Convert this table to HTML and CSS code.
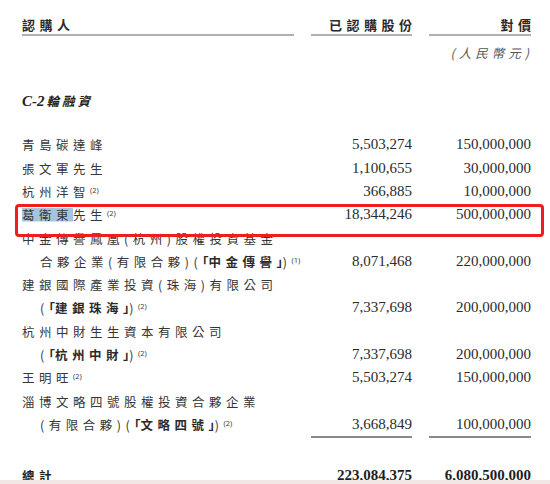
FILE: index.html
```html
<!DOCTYPE html>
<html lang="zh-Hant">
<head>
<meta charset="utf-8">
<title>認購人</title>
<link rel="stylesheet" href="styles.css">
</head>
<body>
<div class="page">
  <div class="row head">
    <div class="hcell"><span class="hd">認購人</span></div>
    <div class="hcell right"><span class="hd tail">已認購股份</span></div>
    <div class="hcell right"><span class="hd tail">對價</span></div>
  </div>
  <div class="row unit">
    <div></div><div></div>
    <div class="right"><span class="currency">(人民幣元)</span></div>
  </div>
  <div class="section"><span class="latin">C-2</span><span class="cjk">輪融資</span></div>
  <div class="body">
    <div class="row"><div class="name">青島碳達峰</div><div class="num">5,503,274</div><div class="num">150,000,000</div></div>
    <div class="row"><div class="name">張文軍先生</div><div class="num">1,100,655</div><div class="num">30,000,000</div></div>
    <div class="row"><div class="name">杭州洋智<sup class="fn">(2)</sup></div><div class="num">366,885</div><div class="num">10,000,000</div></div>
    <div class="row mark"><div class="name"><span class="hl">葛衛東</span>先生<sup class="fn">(2)</sup></div><div class="num">18,344,246</div><div class="num">500,000,000</div></div>
    <div class="row"><div class="name">中金傳譽鳳凰(杭州)股權投資基金</div><div class="num"></div><div class="num"></div></div>
    <div class="row"><div class="name indent">合夥企業(有限合夥)(<b><span class="br">「</span>中金傳譽<span class="br">」</span></b>)<sup class="fn">(1)</sup></div><div class="num">8,071,468</div><div class="num">220,000,000</div></div>
    <div class="row"><div class="name">建銀國際產業投資(珠海)有限公司</div><div class="num"></div><div class="num"></div></div>
    <div class="row"><div class="name indent">(<b><span class="br">「</span>建銀珠海<span class="br">」</span></b>)<sup class="fn">(2)</sup></div><div class="num">7,337,698</div><div class="num">200,000,000</div></div>
    <div class="row"><div class="name">杭州中財生生資本有限公司</div><div class="num"></div><div class="num"></div></div>
    <div class="row"><div class="name indent">(<b><span class="br">「</span>杭州中財<span class="br">」</span></b>)<sup class="fn">(2)</sup></div><div class="num">7,337,698</div><div class="num">200,000,000</div></div>
    <div class="row"><div class="name">王明旺<sup class="fn">(2)</sup></div><div class="num">5,503,274</div><div class="num">150,000,000</div></div>
    <div class="row"><div class="name">淄博文略四號股權投資合夥企業</div><div class="num"></div><div class="num"></div></div>
    <div class="row last"><div class="name indent">(有限合夥)(<b><span class="br">「</span>文略四號<span class="br">」</span></b>)<sup class="fn">(2)</sup></div><div class="num">3,668,849</div><div class="num">100,000,000</div></div>
  </div>
  <div class="row total"><div class="name"><b>總計</b></div><div class="num">223,084,375</div><div class="num">6,080,500,000</div></div>
</div>
<div class="strip"></div>
</body>
</html>
```

FILE: styles.css
```css
* { box-sizing: border-box; margin: 0; padding: 0; }
html, body { background: #ffffff; }
body {
  width: 550px;
  height: 484px;
  overflow: hidden;
  font-family: "Noto Sans CJK TC", "Noto Sans", sans-serif;
  color: #363636;
}
.page { padding-top: 14px; }

.row {
  display: grid;
  grid-template-columns: 272px 101px 102px;
  column-gap: 17px;
  padding-left: 22px;
  height: 23.3px;
  line-height: 23.3px;
  white-space: nowrap;
}
.right { text-align: right; }

/* header */
.row.head { height: auto; line-height: 19px; }
.hcell { border-bottom: 2px solid #b4afb1; }
.hd {
  font-size: 13px;
  font-weight: 700;
  letter-spacing: 4.5px;
  color: #2a2a2a;
}
.tail { margin-right: -4.5px; }

.row.unit { margin-top: 5px; height: 20px; line-height: 20px; }
.currency {
  font-size: 12.5px;
  font-style: italic;
  letter-spacing: 4px;
  margin-right: -2px;
  color: #555;
}

.section {
  margin-top: 28px;
  padding-left: 22px;
  height: 20px;
  line-height: 20px;
  font-weight: 700;
  font-style: italic;
  color: #222;
}
.section .latin { font-family: "Liberation Serif", serif; font-size: 15px; margin-right: 2px; }
.section .cjk { font-size: 12.5px; letter-spacing: 3px; }

.body { margin-top: 24.35px; }

.name {
  font-size: 12.5px;
  letter-spacing: 4.5px;
}
.name b { font-weight: 700; color: #2a2a2a; }
.name .br { letter-spacing: 0; }
.name.indent { padding-left: 18px; }
.num {
  text-align: right;
  font-family: "Liberation Serif", serif;
  font-size: 15px;
  color: #2b2b2b;
}
.fn {
  font-family: "Noto Sans", sans-serif;
  font-size: 7.5px;
  letter-spacing: 0;
  vertical-align: 4px;
  line-height: 0;
  color: #444;
}
.hl {
  background-image: linear-gradient(#a5c5df, #a5c5df);
  background-size: 100% 13.5px;
  background-position: 0 55%;
  background-repeat: no-repeat;
}

.row.mark { position: relative; }
.row.mark::after {
  content: "";
  position: absolute;
  left: 15px;
  top: 1px;
  width: 523px;
  height: 27px;
  border: 3px solid #f01d1d;
  border-radius: 4px;
}

.row.last { height: 25.3px; }
.row.last .num { border-bottom: 2px solid #8a8a8a; }

.row.total { margin-top: 26px; }
.row.total .num { font-weight: 700; color: #1e1e1e; }
.row.total b { font-weight: 700; color: #222; }

.strip {
  position: fixed;
  left: 0;
  bottom: 0;
  width: 550px;
  height: 4px;
  background: #f2e7e4;
}
```
